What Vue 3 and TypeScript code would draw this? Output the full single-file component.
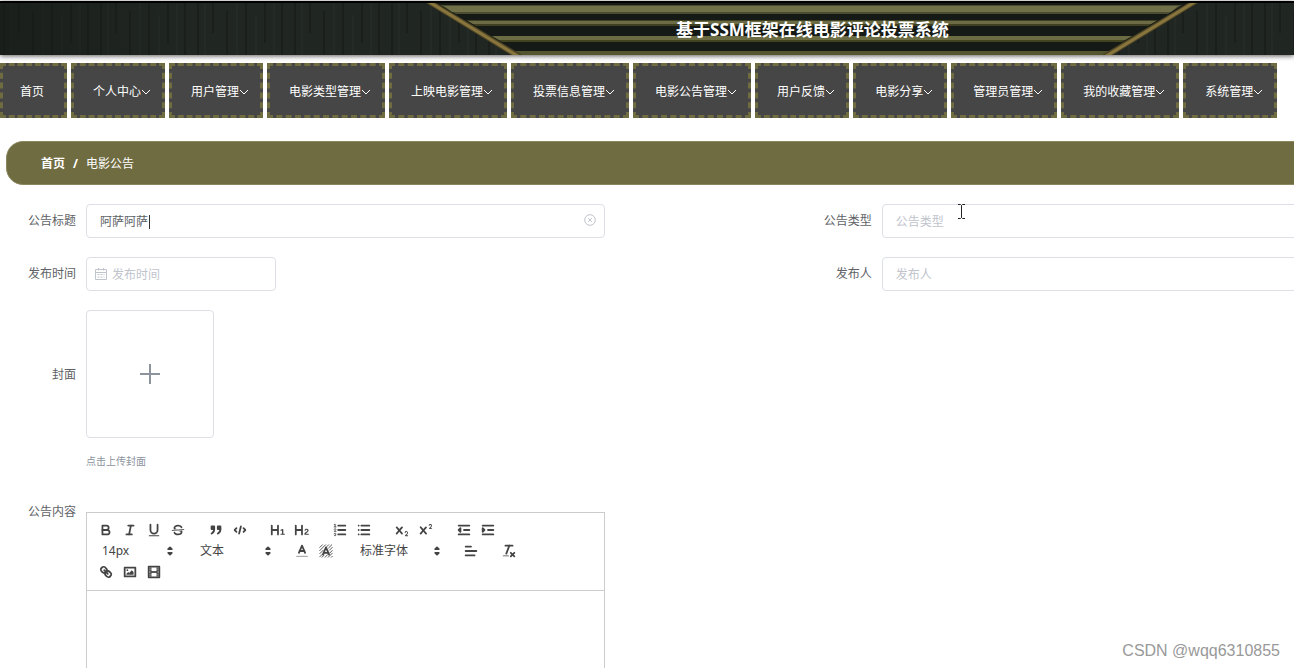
<script setup lang="ts">
import { ref } from 'vue'

interface NavItem {
  label: string
  menu: boolean
}

interface Tool {
  name: string
  svg: string
}

type ToolEntry = { kind: 'tools'; tools: Tool[] } | { kind: 'picker'; name: string; value: string; wide: boolean }

const title = ref('阿萨阿萨')
const kind = ref('')
const publishTime = ref('')
const publisher = ref('')

const navItems: NavItem[] = [
  { label: '首页', menu: false },
  { label: '个人中心', menu: true },
  { label: '用户管理', menu: true },
  { label: '电影类型管理', menu: true },
  { label: '上映电影管理', menu: true },
  { label: '投票信息管理', menu: true },
  { label: '电影公告管理', menu: true },
  { label: '用户反馈', menu: true },
  { label: '电影分享', menu: true },
  { label: '管理员管理', menu: true },
  { label: '我的收藏管理', menu: true },
  { label: '系统管理', menu: true },
]

const toolbar: ToolEntry[] = [
  {
    kind: 'tools',
    tools: [
      { name: '加粗', svg: '<path class="s" d="M5,4H9.5A2.5,2.5,0,0,1,12,6.5v0A2.5,2.5,0,0,1,9.5,9H5A0,0,0,0,1,5,9V4A0,0,0,0,1,5,4Z"/><path class="s" d="M5,9h5.5A2.5,2.5,0,0,1,13,11.5v0A2.5,2.5,0,0,1,10.5,14H5a0,0,0,0,1,0,0V9A0,0,0,0,1,5,9Z"/>' },
      { name: '斜体', svg: '<line class="s" x1="7" x2="13" y1="4" y2="4"/><line class="s" x1="5" x2="11" y1="14" y2="14"/><line class="s" x1="8" x2="10" y1="14" y2="4"/>' },
      { name: '下划线', svg: '<path class="s" d="M5,3V9a4.012,4.012,0,0,0,4,4H9a4.012,4.012,0,0,0,4-4V3"/><rect class="f" height="1" rx="0.5" ry="0.5" width="12" x="3" y="15"/>' },
      { name: '删除线', svg: '<line class="s thin" x1="15.5" x2="2.5" y1="8.5" y2="9.5"/><path class="f" d="M9.007,8C6.542,7.791,6,7.519,6,6.5,6,5.792,7.283,5,9,5c1.571,0,2.765.679,2.969,1.309a1,1,0,0,0,1.9-.617C13.356,4.106,11.354,3,9,3,6.2,3,4,4.538,4,6.5a3.2,3.2,0,0,0,.5,1.843Z"/><path class="f" d="M8.984,10C11.457,10.208,12,10.479,12,11.5c0,0.708-1.283,1.5-3,1.5-1.571,0-2.765-.679-2.969-1.309a1,1,0,1,0-1.9.617C4.644,13.894,6.646,15,9,15c2.8,0,5-1.538,5-3.5a3.2,3.2,0,0,0-.5-1.843Z"/>' },
    ],
  },
  {
    kind: 'tools',
    tools: [
      { name: '引用', svg: '<rect class="f s" height="3" width="3" x="4" y="5"/><rect class="f s" height="3" width="3" x="11" y="5"/><path class="f s" d="M7,8c0,4.031-3,5-3,5"/><path class="f s" d="M14,8c0,4.031-3,5-3,5"/>' },
      { name: '代码块', svg: '<polyline class="s" points="5 7 3 9 5 11"/><polyline class="s" points="13 7 15 9 13 11"/><line class="s" x1="10" x2="8" y1="5" y2="13"/>' },
    ],
  },
  {
    kind: 'tools',
    tools: [
      { name: '一级标题', svg: '<path class="f" d="M10,4V14a1,1,0,0,1-2,0V10H3v4a1,1,0,0,1-2,0V4A1,1,0,0,1,3,4V8H8V4a1,1,0,0,1,2,0Zm6.068,9.209H14.985V8.375a0.542,0.542,0,0,0-.605-0.605,0.621,0.621,0,0,0-.3.051L12.065,8.847a0.568,0.568,0,0,0,.33,1.065,0.8,0.8,0,0,0,.407-0.1l0.693-.381v3.778H12.4a0.57,0.57,0,1,0,0,1.131h3.664a0.57,0.57,0,1,0,0-1.131Z"/>' },
      { name: '二级标题', svg: '<path class="f" d="M16.74,13.819a0.562,0.562,0,0,1-.541.617H12.4a0.654,0.654,0,0,1-.705-0.713c0-2.322,3.311-2.761,3.311-4.1A0.812,0.812,0,0,0,14.1,8.83a0.928,0.928,0,0,0-.968.672,0.653,0.653,0,0,1-.638.436,0.618,0.618,0,0,1-.649-0.628c0-.9,1.1-1.682,2.3-1.682a2.012,2.012,0,0,1,2.238,2c0,1.936-2.385,2.416-3.07,3.575H16.2A0.562,0.562,0,0,1,16.74,13.819ZM9,3A1,1,0,0,0,8,4V8H3V4A1,1,0,0,0,1,4V14a1,1,0,0,0,2,0V10H8v4a1,1,0,0,0,2,0V4A1,1,0,0,0,9,3Z"/>' },
    ],
  },
  {
    kind: 'tools',
    tools: [
      { name: '有序列表', svg: '<line class="s" x1="7" x2="15" y1="4" y2="4"/><line class="s" x1="7" x2="15" y1="9" y2="9"/><line class="s" x1="7" x2="15" y1="14" y2="14"/><line class="s thin" x1="2.5" x2="4.5" y1="5.5" y2="5.5"/><path class="f" d="M3.5,6A0.5,0.5,0,0,1,3,5.5V3.085l-0.276.138A0.5,0.5,0,0,1,2.053,3c-0.124-.247-0.023-0.324.224-0.447l1-.5A0.5,0.5,0,0,1,4,2.5v3A0.5,0.5,0,0,1,3.5,6Z"/><path class="s thin" d="M4.5,10.5h-2c0-.234,1.85-1.076,1.85-2.234A0.959,0.959,0,0,0,2.5,8.156"/><path class="s thin" d="M2.5,14.846a0.959,0.959,0,0,0,1.85-.109A0.7,0.7,0,0,0,3.75,14a0.688,0.688,0,0,0,.6-0.736,0.959,0.959,0,0,0-1.85-.109"/>' },
      { name: '无序列表', svg: '<line class="s" x1="6" x2="15" y1="4" y2="4"/><line class="s" x1="6" x2="15" y1="9" y2="9"/><line class="s" x1="6" x2="15" y1="14" y2="14"/><line class="s" x1="3" x2="3" y1="4" y2="4"/><line class="s" x1="3" x2="3" y1="9" y2="9"/><line class="s" x1="3" x2="3" y1="14" y2="14"/>' },
    ],
  },
  {
    kind: 'tools',
    tools: [
      { name: '下标', svg: '<path class="f" d="M15.5,15H13.861a3.858,3.858,0,0,0,1.914-2.975,1.8,1.8,0,0,0-1.6-1.751A1.921,1.921,0,0,0,12.021,11.7a0.5,0.5,0,1,0,.957.291h0a0.914,0.914,0,0,1,1.053-.725,0.81,0.81,0,0,1,.744.762c0,1.076-1.17,1.86-1.892,2.438a1,1,0,0,0-.383.785,0.5,0.5,0,0,0,.5.75H15.5A0.5,0.5,0,0,0,15.5,15Z"/><path class="f" d="M9.65,5.241a1,1,0,0,0-1.409.108L6,7.964,3.759,5.349A1,1,0,0,0,2.192,6.59L4.684,9.5,2.241,12.35A1,1,0,0,0,3.71,13.7L6,11.036,8.29,13.7a1,1,0,0,0,1.469-1.35L7.316,9.5,9.759,6.651A1,1,0,0,0,9.65,5.241Z"/>' },
      { name: '上标', svg: '<path class="f" d="M15.5,7H13.861a4.015,4.015,0,0,0,1.914-2.975,1.8,1.8,0,0,0-1.6-1.751A1.922,1.922,0,0,0,12.021,3.7a0.5,0.5,0,1,0,.957.291,0.917,0.917,0,0,1,1.053-.725,0.81,0.81,0,0,1,.744.762c0,1.077-1.164,1.925-1.934,2.486A1,1,0,0,0,12.5,7.5,0.5,0.5,0,0,0,13,8h2.5A0.5,0.5,0,0,0,15.5,7Z"/><path class="f" d="M9.651,5.241a1,1,0,0,0-1.41.108L6,7.964,3.759,5.349A1,1,0,1,0,2.192,6.59L4.684,9.5,2.241,12.35A1,1,0,1,0,3.71,13.7L6,11.036,8.29,13.7a1,1,0,1,0,1.469-1.35L7.316,9.5,9.759,6.651A1,1,0,0,0,9.651,5.241Z"/>' },
    ],
  },
  {
    kind: 'tools',
    tools: [
      { name: '减少缩进', svg: '<line class="s" x1="3" x2="15" y1="14" y2="14"/><line class="s" x1="3" x2="15" y1="4" y2="4"/><line class="s" x1="9" x2="15" y1="9" y2="9"/><polyline class="f s" points="5 7 5 11 3 9 5 7"/>' },
      { name: '增加缩进', svg: '<line class="s" x1="3" x2="15" y1="14" y2="14"/><line class="s" x1="3" x2="15" y1="4" y2="4"/><line class="s" x1="9" x2="15" y1="9" y2="9"/><polyline class="f s" points="3 7 3 11 5 9 3 7"/>' },
    ],
  },
  { kind: 'picker', name: '字号', value: '14px', wide: false },
  { kind: 'picker', name: '段落格式', value: '文本', wide: false },
  {
    kind: 'tools',
    tools: [
      { name: '字体颜色', svg: '<line class="s pale" x1="3" x2="15" y1="15" y2="15"/><polyline class="s" points="5.5 11 9 3 12.5 11"/><line class="s" x1="11.63" x2="6.38" y1="9" y2="9"/>' },
      { name: '背景颜色', svg: '<path class="s thin" d="M2 5L5 2M2 8.500L8.500 2M2 12L6 8M12 2L10 4M2 15.500L5 12.500M15.500 2L12 5.500M4.500 16L7 13.500M16 5L13 8M8 16L11 13M16 8.500L13.500 11M11.500 16L16 11.500M15 16L16 15"/><polyline class="s" points="5.5 13 9 5 12.500 13"/><line class="s" x1="11.63" x2="6.38" y1="11" y2="11"/>' },
    ],
  },
  { kind: 'picker', name: '字体', value: '标准字体', wide: true },
  {
    kind: 'tools',
    tools: [
      { name: '对齐方式', svg: '<line class="s" x1="3" x2="15" y1="9" y2="9"/><line class="s" x1="3" x2="13" y1="14" y2="14"/><line class="s" x1="3" x2="9" y1="4" y2="4"/>' },
    ],
  },
  {
    kind: 'tools',
    tools: [
      { name: '清除格式', svg: '<line class="s" x1="5" x2="13" y1="3" y2="3"/><line class="s" x1="6" x2="9.35" y1="12" y2="3"/><line class="s" x1="11" x2="15" y1="11" y2="15"/><line class="s" x1="15" x2="11" y1="11" y2="15"/><rect class="f" height="1" rx="0.5" ry="0.5" width="7" x="2" y="14"/>' },
    ],
  },
  {
    kind: 'tools',
    tools: [
      { name: '链接', svg: '<g transform="rotate(90 9 9)"><line class="s" x1="7" x2="11" y1="11" y2="7"/><path class="s" d="M8.9,13.423a3.476,3.476,0,0,0,.36-4.679A3.476,3.476,0,0,0,4.577,9.1C3.185,10.5,2.035,11.6,4.217,13.783S7.5,14.815,8.9,13.423Z"/><path class="s" d="M13.423,8.9a3.476,3.476,0,0,1-4.679.36,3.476,3.476,0,0,1,.36-4.679c1.392-1.392,2.5-2.542,4.679-.36S14.815,7.5,13.423,8.9Z"/></g>' },
      { name: '图片', svg: '<rect class="s" height="10" width="12" x="3" y="4"/><circle class="f" cx="6" cy="7" r="1"/><polyline class="f" points="5 12 5 11 7 9 8 10 11 7 13 9 13 12 5 12"/>' },
      { name: '视频', svg: '<rect class="s" height="12" width="12" x="3" y="3"/><rect class="f" height="12" width="1" x="5" y="3"/><rect class="f" height="12" width="1" x="12" y="3"/><rect class="f" height="2" width="8" x="5" y="8"/><rect class="f" height="1" width="3" x="3" y="5"/><rect class="f" height="1" width="3" x="3" y="7"/><rect class="f" height="1" width="3" x="3" y="10"/><rect class="f" height="1" width="3" x="3" y="12"/><rect class="f" height="1" width="3" x="12" y="5"/><rect class="f" height="1" width="3" x="12" y="7"/><rect class="f" height="1" width="3" x="12" y="10"/><rect class="f" height="1" width="3" x="12" y="12"/>' },
    ],
  },
]
</script>

<template>
  <div class="page">
    <header class="banner">
      <svg class="banner-art" viewBox="0 0 1294 52" preserveAspectRatio="none" aria-hidden="true">
        <defs>
          <pattern id="wood" width="97" height="52" patternUnits="userSpaceOnUse">
            <rect width="97" height="52" fill="#202622" />
            <path d="M4 0V52M19 0V30M33 8V52M52 0V52M71 0V40M88 0V52" stroke="#1a1f1c" stroke-width="2" />
            <path d="M11 0V52M43 0V52M62 12V52M80 0V52" stroke="#242a26" stroke-width="2" />
          </pattern>
          <linearGradient id="shade" x1="0" x2="1">
            <stop offset="0" stop-color="#151a17" stop-opacity="0.6" />
            <stop offset="0.15" stop-color="#151a17" stop-opacity="0" />
            <stop offset="1" stop-color="#151a17" stop-opacity="0" />
          </linearGradient>
        </defs>
        <rect width="1294" height="52" fill="url(#wood)" />
        <rect width="1294" height="52" fill="url(#shade)" />
        <path d="M430 0H1192L1103 52H517Z" fill="#151a16" />
        <path d="M440 2H1182L1168 11H456Z" fill="#4c4d30" />
        <path d="M444 3H1178L1171 9H452Z" fill="#717149" />
        <path d="M466 17H1158L1148 23H476Z" fill="#3f4021" />
        <path d="M468 18H1156L1151 21H473Z" fill="#6b6b46" />
        <path d="M492 33H1132L1122 39H502Z" fill="#42431f" />
        <path d="M492 33H1132L1125 37H499Z" fill="#6b6b44" />
        <path d="M515 48H1110L1103 52H522Z" fill="#555630" />
        <path d="M426 0H436L522 52H511Z M1198 0H1188L1102 52H1113Z" fill="#4d4425" />
        <path d="M428 0H434L519 52H513Z M1196 0H1190L1105 52H1111Z" fill="#88753d" />
      </svg>
      <h1>基于SSM框架在线电影评论投票系统</h1>
    </header>

    <nav class="nav" aria-label="主导航">
      <a v-for="item in navItems" :key="item.label" href="#" :class="['nav-item', { plain: !item.menu }]">
        <span>{{ item.label }}</span>
        <svg v-if="item.menu" class="chevron" viewBox="0 0 10 10" aria-hidden="true"><path d="M1 3L5 7L9 3" /></svg>
      </a>
    </nav>

    <main class="content">
      <nav class="crumbs" aria-label="面包屑">
        <a href="#">首页</a><b>/</b><span>电影公告</span>
      </nav>

      <form class="form" @submit.prevent>
        <div class="item">
          <label for="title">公告标题</label>
          <div class="field">
            <input id="title" v-model="title" type="text" />
            <i class="caret"></i>
            <button class="clear" type="button" aria-label="清空" @click="title = ''">
              <svg viewBox="0 0 12 12" aria-hidden="true"><circle cx="6" cy="6" r="5.300" /><path d="M4.200 4.200L7.800 7.800M7.800 4.200L4.200 7.800" /></svg>
            </button>
          </div>
        </div>
        <div class="item">
          <label for="kind">公告类型</label>
          <div class="field"><input id="kind" v-model="kind" type="text" placeholder="公告类型" /></div>
        </div>
        <div class="item">
          <label for="time">发布时间</label>
          <div class="field date">
            <svg class="calendar" viewBox="0 0 12 12" aria-hidden="true">
              <path d="M.5 1.500H11.500V11.500H.5ZM.5 4.500H11.500M3.500 0V2.500M8.500 0V2.500" />
              <path d="M2.500 6.500H9.500M2.500 9H9.500" stroke-dasharray="2 1" />
            </svg>
            <input id="time" v-model="publishTime" type="text" placeholder="发布时间" />
          </div>
        </div>
        <div class="item">
          <label for="publisher">发布人</label>
          <div class="field"><input id="publisher" v-model="publisher" type="text" placeholder="发布人" /></div>
        </div>
        <div class="item full">
          <label for="cover" class="cover-label">封面</label>
          <div class="upload">
            <button id="cover" type="button" aria-describedby="cover-tip">
              <svg viewBox="0 0 20 20" aria-hidden="true"><path d="M10 0V20M0 10H20" /></svg>
            </button>
            <p id="cover-tip">点击上传封面</p>
          </div>
        </div>
        <div class="item full editor-item">
          <label for="body" class="body-label">公告内容</label>
          <div class="editor">
            <div class="toolbar" role="toolbar" aria-label="编辑工具">
              <template v-for="(entry, i) in toolbar" :key="i">
                <div v-if="entry.kind === 'tools'" class="group">
                  <button v-for="tool in entry.tools" :key="tool.name" type="button" :aria-label="tool.name">
                    <svg viewBox="0 0 18 18" aria-hidden="true" v-html="tool.svg"></svg>
                  </button>
                </div>
                <div v-else :class="['picker', { wide: entry.wide }]">
                  <select :aria-label="entry.name"><option>{{ entry.value }}</option></select>
                  <svg viewBox="0 0 18 18" aria-hidden="true"><polygon class="f s" points="7 11 9 13 11 11 7 11" /><polygon class="f s" points="7 7 9 5 11 7 7 7" /></svg>
                </div>
              </template>
            </div>
            <textarea id="body"></textarea>
          </div>
        </div>
      </form>
    </main>

    <svg class="pointer" viewBox="0 0 7 15" aria-hidden="true"><path d="M0 .5H2.500L3.500 1.500L4.500 .5H7M3.500 1.500V13.500M0 14.500H2.500L3.500 13.500L4.500 14.500H7" /></svg>
    <div class="watermark">CSDN @wqq6310855</div>
  </div>
</template>

<style>
body {
  margin: 0;
  background: #fff;
}
</style>

<style scoped>
.page {
  position: relative;
  height: 100vh;
  overflow: hidden;
  display: flex;
  flex-direction: column;
  font: 12px/18px "Noto Sans", "Noto Sans CJK SC", sans-serif;
  color: #606266;
}
.page * {
  box-sizing: border-box;
}
input,
select,
textarea,
button {
  font: inherit;
  color: inherit;
  margin: 0;
}
.banner {
  position: relative;
  flex: none;
  margin-top: 1px;
  height: 54px;
  border-top: 2px solid #000;
  background: #202622;
  box-shadow: 0 1px 5px rgba(0, 0, 0, 0.65);
  display: flex;
  align-items: center;
  justify-content: center;
  padding: 2px 0 0 331px;
}
.banner-art {
  position: absolute;
  inset: 0;
  width: 100%;
  height: 100%;
}
h1 {
  position: relative;
  margin: 0;
  font-size: 17px;
  line-height: 24px;
  font-weight: 700;
  color: #fff;
  white-space: nowrap;
}
.nav {
  flex: none;
  display: flex;
  gap: 4px;
  margin-top: 8px;
}
.nav-item {
  flex: none;
  height: 55px;
  display: flex;
  align-items: center;
  padding: 2px 11px 0 19px;
  border: 3px dashed #706c41;
  background: #464646;
  color: #fff;
  text-decoration: none;
  white-space: nowrap;
}
.nav-item.plain {
  padding: 2px 20px 0 17px;
}
.chevron {
  width: 10px;
  height: 10px;
  fill: none;
  stroke: #fff;
}
.content {
  flex: none;
  width: 123%;
  margin: 23px 0 0 6px;
}
.crumbs {
  display: flex;
  align-items: center;
  height: 44px;
  padding: 2px 0 0 34px;
  border: 1px solid #8b885f;
  border-radius: 17px;
  background: #706c41;
  color: #fff;
}
.crumbs a {
  color: inherit;
  font-weight: 700;
  text-decoration: none;
}
.crumbs b {
  margin: 0 8px;
}
.form {
  display: grid;
  grid-template-columns: 1fr 1fr;
  row-gap: 19px;
  padding-top: 19px;
}
.item {
  display: flex;
  align-items: flex-start;
}
.full {
  grid-column: 1 / -1;
}
label {
  flex: none;
  width: 80px;
  padding-right: 10px;
  text-align: right;
  line-height: 34px;
}
.field {
  position: relative;
  width: 519px;
}
.field input {
  display: block;
  width: 100%;
  height: 34px;
  padding: 0 30px 0 13px;
  border: 1px solid #dcdfe6;
  border-radius: 4px;
  background: #fff;
  outline: none;
}
.field input::placeholder {
  color: #c0c4cc;
  opacity: 1;
}
.field.date {
  width: 190px;
}
.date input {
  padding-left: 25px;
}
.calendar {
  position: absolute;
  left: 9px;
  top: 11px;
  width: 12px;
  height: 12px;
  fill: none;
  stroke: #c0c4cc;
}
.caret {
  position: absolute;
  left: 63px;
  top: 11px;
  width: 1px;
  height: 14px;
  background: #333;
}
.clear {
  position: absolute;
  right: 9px;
  top: 10px;
  width: 12px;
  height: 12px;
  padding: 0;
  border: 0;
  background: none;
}
.clear svg {
  display: block;
  fill: none;
  stroke: #c0c4cc;
}
.cover-label {
  line-height: 130px;
}
.upload button {
  display: flex;
  align-items: center;
  justify-content: center;
  width: 128px;
  height: 128px;
  padding: 0;
  border: 1px solid #dcdfe6;
  border-radius: 4px;
  background: #fff;
}
.upload button svg {
  width: 20px;
  height: 20px;
  fill: none;
  stroke: #8c939d;
  stroke-width: 2;
}
.upload p {
  margin: 15px 0 0;
  font-size: 10px;
  line-height: 16px;
  color: #8c939d;
}
.editor-item {
  padding-top: 24px;
}
.body-label {
  line-height: 0;
}
.editor {
  width: 519px;
  border: 1px solid #ccc;
}
.toolbar {
  display: flex;
  flex-wrap: wrap;
  padding: 6px 6px 8px 7px;
  border-bottom: 1px solid #ccc;
  color: #444;
}
.group {
  display: flex;
  margin-right: 14px;
}
.group button {
  width: 24px;
  height: 21px;
  padding: 2px 4px;
  border: 0;
  background: none;
}
.group svg {
  display: block;
  width: 16px;
  height: 16px;
}
.toolbar :deep(.s) {
  fill: none;
  stroke: #444;
  stroke-width: 2;
  stroke-linecap: round;
  stroke-linejoin: round;
}
.toolbar :deep(.f) {
  fill: #444;
}
.toolbar :deep(.thin) {
  stroke-width: 1;
}
.toolbar :deep(.pale) {
  stroke-width: 1;
  opacity: 0.6;
}
.picker {
  position: relative;
  width: 84px;
  height: 21px;
  margin-right: 14px;
}
.picker.wide {
  width: 93px;
}
.picker select {
  display: block;
  width: 100%;
  height: 21px;
  padding: 0 0 0 8px;
  border: 0;
  background: none;
  appearance: none;
  line-height: 21px;
}
.picker svg {
  position: absolute;
  right: 0;
  top: 3px;
  width: 16px;
  height: 16px;
  pointer-events: none;
}
textarea {
  display: block;
  width: 100%;
  height: 200px;
  padding: 12px;
  border: 0;
  outline: none;
  resize: none;
}
.pointer {
  position: absolute;
  left: 958px;
  top: 204px;
  width: 7px;
  height: 15px;
  fill: none;
  stroke: #222;
}
.watermark {
  position: absolute;
  right: 14px;
  bottom: 7px;
  font: 16px/20px "Liberation Sans", Arial, sans-serif;
  color: #999;
}
</style>
